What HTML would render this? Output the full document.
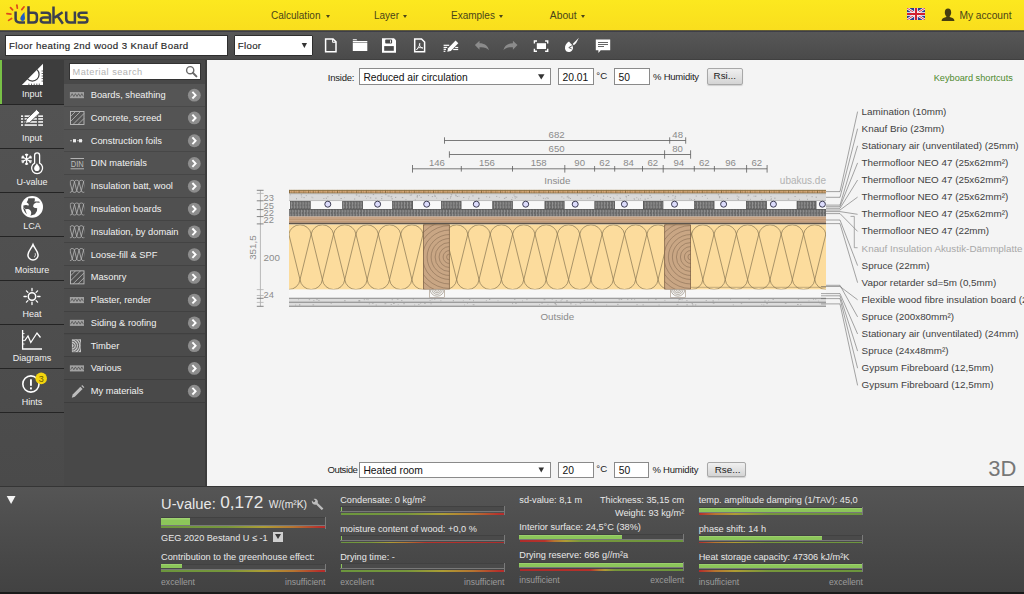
<!DOCTYPE html>
<html><head><meta charset="utf-8">
<style>
*{box-sizing:border-box;margin:0;padding:0}
html,body{width:1024px;height:594px;overflow:hidden;background:#1a1a1a;font-family:"Liberation Sans",sans-serif}
.abs{position:absolute}
#hdr{left:0;top:0;width:1024px;height:31.6px;background:linear-gradient(#fce81f,#f9de1d 93.5%,#6a6230 95%,#3e3e48 96.5%,#3e3e48)}
#tb{left:0;top:31.6px;width:1024px;height:28.4px;background:linear-gradient(#575757,#4a4a4a 96%,#383838)}
#nav{left:0;top:60px;width:64px;height:426px;background:linear-gradient(#545454,#4a4a4a)}
#menu{left:64px;top:60px;width:141px;height:426px;background:#484848}
#strip{left:205px;top:60px;width:2px;height:426px;background:#3c3c3c}
#main{left:207px;top:60px;width:817px;height:426px;background:#f4f4f4}
#bot{left:0;top:485.5px;width:1024px;height:106px;background:linear-gradient(#555,#4c4c4c 45%,#424242);border-top:1px solid #353535}
.hm{font-size:10px;color:#4a4418;top:10.2px;line-height:12px}
.tri{width:0;height:0;border-left:2.5px solid transparent;border-right:2.5px solid transparent;border-top:3px solid #4a4418}
.inp{background:#fff;border:1px solid #2e2e2e;color:#111;line-height:12px;white-space:nowrap}
.dd{position:absolute;width:0;height:0;border-left:2.8px solid transparent;border-right:2.8px solid transparent;border-top:5.2px solid #222}
.nsep{left:0;width:64px;height:1.3px;background:#242424}
.nl{left:0;width:64px;text-align:center;font-size:9px;color:#f0f0f0;line-height:10px}
.sbox{background:#fff;border:1px solid #333}
.mrow{left:64px;width:141px;height:22.77px;background:#535353;border-bottom:1px solid #464646}
.mt{left:90.7px;font-size:9.3px;color:#f2f2f2;line-height:11px;white-space:nowrap}
.sel{background:#fff;border:1px solid #8a8a8a;color:#111;line-height:12px;white-space:nowrap}
.ibox{background:#fff;border:1px solid #8a8a8a;color:#111;line-height:12px;white-space:nowrap}
.btn{background:linear-gradient(#f0f0f0,#d4d4d4);border:1px solid #a8a8a8;border-radius:2px;color:#222;line-height:12px;box-shadow:0 1px 1px rgba(0,0,0,.15)}
.dd2{position:absolute;width:0;height:0;border-left:3.5px solid transparent;border-right:3.5px solid transparent;border-top:6px solid #333}
.lab{left:861.6px;font-size:9.85px;line-height:12px;white-space:nowrap}
.bt{white-space:nowrap;line-height:1}

</style></head><body>
<div id="hdr" class="abs"></div>
<div id="tb" class="abs"></div>
<div id="nav" class="abs"></div>
<div id="menu" class="abs"></div>
<div id="strip" class="abs"></div>
<div id="main" class="abs"></div>
<div id="bot" class="abs"></div>
<!-- HEADER -->
<svg class="abs" style="left:0;top:0" width="100" height="31" viewBox="0 0 100 31">
 <g stroke="#de4a1c" stroke-linecap="round">
  <path d="M16.9 5.1L17.3 8.1" stroke-width="1.7"/>
  <path d="M10.5 7.6L12.6 9.9" stroke-width="1.7"/>
  <path d="M24.1 6.8L21.8 9.6" stroke-width="1.7"/>
  <path d="M6.9 13.6L10.9 14.1" stroke-width="1.7"/>
  <path d="M8.6 20.4L11.6 18.5" stroke-width="1.7"/>
 </g>
 <g fill="none" stroke="#3c404f" stroke-width="2.5">
  <path d="M15.6 11.6V18.6Q15.6 22.5 19.5 22.5H25"/>
  <path d="M28.5 6.2V22.5H33.6Q36.9 22.5 36.9 19.2V15.9Q36.9 12.7 33.6 12.7H28.5"/>
  <path d="M40.6 12.7H46.8Q50.1 12.7 50.1 16V23.7M50.1 17.5H44Q40.8 17.5 40.8 20Q40.8 22.5 44 22.5H50.1"/>
  <path d="M53.5 6.5V23.7M62.6 12.2L54.6 17.6M57.6 16.1L62.9 23.7"/>
  <path d="M66.2 11.6V18.8Q66.2 22.5 69.9 22.5H74.9M74.9 11.6V23.7"/>
  <path d="M87.6 12.7H81.3Q78.5 12.7 78.5 15Q78.5 17.4 81.3 17.4H84.7Q87.4 17.4 87.4 19.9Q87.4 22.5 84.7 22.5H77.6"/>
 </g>
 <path d="M24.6 11.9C22.8 14 20.3 16.2 20.3 18.6C20.3 20.2 21.4 21 22.6 21C24 21 25 19.8 25 18C25 16 24.3 14.5 24.6 11.9Z" fill="#1f5ec6"/>
</svg>
<div class="abs hm" style="left:271px">Calculation</div><div class="abs tri" style="left:326px;top:15px"></div>
<div class="abs hm" style="left:374px">Layer</div><div class="abs tri" style="left:403px;top:15px"></div>
<div class="abs hm" style="left:451px">Examples</div><div class="abs tri" style="left:499px;top:15px"></div>
<div class="abs hm" style="left:549.8px;font-size:10.3px">About</div><div class="abs tri" style="left:580.6px;top:15px"></div>
<svg class="abs" style="left:907px;top:8px" width="18" height="12" viewBox="0 0 60 40" preserveAspectRatio="none">
 <rect width="60" height="40" fill="#2a3f8f"/>
 <path d="M0 0L60 40M60 0L0 40" stroke="#fff" stroke-width="8"/>
 <path d="M0 0L60 40M60 0L0 40" stroke="#d02030" stroke-width="3"/>
 <path d="M30 0V40M0 20H60" stroke="#fff" stroke-width="12"/>
 <path d="M30 0V40M0 20H60" stroke="#d02030" stroke-width="7"/>
</svg>
<svg class="abs" style="left:941px;top:8px" width="14" height="14" viewBox="0 0 14 14">
 <path d="M7 0.6C4.9 0.6 3.8 2.3 3.8 4.4C3.8 6.2 4.6 7.6 5.3 8.2L5.3 9.1C3.3 9.6 1.2 10.4 0.8 11.8L0.6 13H13.4L13.2 11.8C12.8 10.4 10.7 9.6 8.7 9.1L8.7 8.2C9.4 7.6 10.2 6.2 10.2 4.4C10.2 2.3 9.1 0.6 7 0.6Z" fill="#463e10"/>
</svg>
<div class="abs hm" style="left:959.4px;font-size:10.2px">My account</div>

<!-- TOOLBAR -->
<div class="abs inp" style="left:5.2px;top:35.2px;width:223px;height:20.6px;font-size:9.7px;letter-spacing:0.38px;padding:3.6px 0 0 2.8px;color:#262626;-webkit-text-stroke:0.15px #262626">Floor heating 2nd wood 3 Knauf Board</div>
<div class="abs inp" style="left:234.2px;top:35.2px;width:79.3px;height:20.6px;padding:3.4px 0 0 2.6px;border-radius:1px;color:#262626;font-size:9.7px;letter-spacing:0.3px;-webkit-text-stroke:0.15px #262626">Floor</div><svg class="abs" style="left:300px;top:40px" width="10" height="10" viewBox="300 40 10 10"><path d="M301.7 42.9H307L304.35 48Z" fill="#333"/></svg>

<svg class="abs" style="left:0;top:0" width="1024" height="60" viewBox="0 0 1024 60">
 <g fill="none" stroke="#fff" stroke-width="1.5">
  <path d="M325.6 38.9H333L336 41.9V51.7H325.6Z"/>
  <path d="M332.6 39V42.3H335.9" stroke-width="1"/>
 </g>
 <g fill="#fff">
  <path d="M352.8 39.2H356.5L357.3 40.3H352.8Z"/>
  <rect x="352.8" y="41" width="14.5" height="1.1"/>
  <rect x="352.8" y="42.6" width="14.5" height="8.4"/>
 </g>
 <path d="M382 38.2H394L396 40.2V52.8H382Z" fill="#fff"/>
 <rect x="385.2" y="39.6" width="6.9" height="4" rx="0.8" fill="#4a4a4a"/>
 <rect x="390.1" y="40.3" width="0.9" height="2.4" fill="#fff"/>
 <rect x="384.2" y="46.1" width="9.6" height="4.7" fill="#4a4a4a"/>
 <g fill="none" stroke="#fff" stroke-width="1.5">
  <path d="M414.7 38.9H421.5L424.6 42V51.7H414.7Z"/>
 </g>
 <path d="M416.5 49.8C418 48 419.5 45.8 419.8 44.2C420.2 42.6 419 43.2 419.5 45C420 46.7 421.5 48 423 48.2M416.5 49.8L418.6 47.6L422.8 47.8" fill="none" stroke="#fff" stroke-width="0.9"/>
 <!-- edit -->
 <g fill="#fff">
  <rect x="443.6" y="44.7" width="5.6" height="1.2"/><rect x="443.6" y="46.8" width="3.6" height="1.2"/><rect x="443.6" y="48.7" width="2.4" height="1.2"/><rect x="443.6" y="50.7" width="1.8" height="1.2"/>
  <rect x="455.2" y="46.9" width="3" height="1.2"/><rect x="453.2" y="48.9" width="5" height="1.2"/>
  <path d="M447.3 51.8L448.1 48.3L455.6 40.5L458.3 43.2L450.8 50.9Z"/>
 </g>
 <!-- undo/redo -->
 <path d="M474.9 45L479.5 40.7V43.3C484.5 43.3 488 45.8 489 50.3C487 47.9 484 47 479.5 47.3V49.8Z" fill="#8b8b8b"/>
 <path d="M517.5 45L512.9 40.7V43.3C507.9 43.3 504.4 45.8 503.4 50.3C505.4 47.9 508.4 47 512.9 47.3V49.8Z" fill="#8b8b8b"/>
 <!-- fit -->
 <g fill="none" stroke="#fff" stroke-width="1.4">
  <path d="M534.4 43.6V41H537M545.1 41H547.7V43.6M547.7 48.7V51.3H545.1M537 51.3H534.4V48.7"/>
 </g>
 <rect x="536.8" y="43.2" width="9.2" height="5.8" fill="#fff"/>
 <!-- brush -->
 <path d="M578.9 37.8L576.2 43L573.9 45.2L572.7 44.1L574.6 41.9Z" fill="#fff"/>
 <path d="M572.3 44.9C571 44 569.8 42.8 569 41.6C566.4 43 564.7 45.6 565 48.4C565.3 51 567.4 52.4 569.6 51.9C571.7 51.4 572.8 49.7 573.1 47.9Z" fill="#fff"/>
 <path d="M572.2 45.6L568.8 47.6L571.6 48.8" fill="none" stroke="#4b4b4b" stroke-width="0.9"/>
 <!-- comment -->
 <path d="M595.8 39.4H610.2V50.3H600.7L598.4 52.9V50.3H595.8Z" fill="#fff"/>
 <g fill="#555"><rect x="598" y="42" width="10" height="0.9"/><rect x="598" y="44" width="10" height="0.9"/><rect x="598" y="46" width="6" height="0.9"/></g>
</svg>

<!-- NAV -->
<div class="abs" style="left:0;top:60px;width:64px;height:44px;background:#3d3d3d"></div>
<div class="abs" style="left:0;top:60px;width:2px;height:44px;background:#78c046"></div>
<div class="abs nsep" style="top:104px"></div>
<div class="abs nsep" style="top:148px"></div>
<div class="abs nsep" style="top:192px"></div>
<div class="abs nsep" style="top:236px"></div>
<div class="abs nsep" style="top:280px"></div>
<div class="abs nsep" style="top:324px"></div>
<div class="abs nsep" style="top:368px"></div>
<div class="abs nsep" style="top:412px"></div>
<div class="abs nl" style="top:89px">Input</div>
<div class="abs nl" style="top:133px">Input</div>
<div class="abs nl" style="top:177px">U-value</div>
<div class="abs nl" style="top:221px">LCA</div>
<div class="abs nl" style="top:265px">Moisture</div>
<div class="abs nl" style="top:309px">Heat</div>
<div class="abs nl" style="top:353px">Diagrams</div>
<div class="abs nl" style="top:397px">Hints</div>
<svg class="abs" style="left:0;top:60px" width="64" height="360" viewBox="0 60 64 360">
 <!-- set square -->
 <path d="M21.8 85L43 63.8V85Z" fill="#fff"/>
 <path d="M27.6 79.2A6.7 6.7 0 0 0 37.1 69.7" fill="none" stroke="#3d3d3d" stroke-width="1.2"/>
 <g stroke="#3d3d3d" stroke-width="0.8">
  <path d="M28.9 83.6V85M31.5 83.6V85M34.2 83.6V85M36.8 83.6V85M39.3 83.6V85"/>
  <path d="M41.6 71H43M41.6 73.5H43M41.6 76H43M41.6 78.6H43M41.6 81.1H43"/>
 </g>
 <!-- input form -->
 <g fill="#fff">
  <rect x="21" y="115.4" width="2.1" height="1.5"/><rect x="24.6" y="115.4" width="12.3" height="1.5"/><rect x="38.2" y="115.4" width="4.8" height="1.5"/>
  <rect x="21" y="118.2" width="2.1" height="1.5"/><rect x="24.6" y="118.2" width="12.3" height="1.5"/><rect x="38.2" y="118.2" width="4.8" height="1.5"/>
  <rect x="21" y="121.2" width="2.1" height="1.5"/><rect x="24.6" y="121.2" width="12.3" height="1.5"/><rect x="38.2" y="121.2" width="4.8" height="1.5"/>
  <rect x="21" y="124.3" width="2.1" height="1.5"/><rect x="24.6" y="124.3" width="12.3" height="1.5"/><rect x="38.2" y="124.3" width="4.8" height="1.5"/>
 </g>
 <path d="M25.3 123.4L26.4 119.4L36.6 109.6L39.9 112.9L29.6 122.6Z" fill="#fff" stroke="#4f4f4f" stroke-width="0.9"/>
 <!-- snowflake + thermometer -->
 <path d="M26.60 159.30L26.60 154.10 M26.60 156.08L25.45 154.44 M26.60 156.08L27.75 154.44 M26.60 159.30L22.10 156.70 M23.81 157.69L21.82 157.86 M23.81 157.69L22.96 155.88 M26.60 159.30L22.10 161.90 M23.81 160.91L22.96 162.72 M23.81 160.91L21.82 160.74 M26.60 159.30L26.60 164.50 M26.60 162.52L27.75 164.16 M26.60 162.52L25.45 164.16 M26.60 159.30L31.10 161.90 M29.39 160.91L31.38 160.74 M29.39 160.91L30.24 162.72 M26.60 159.30L31.10 156.70 M29.39 157.69L30.24 155.88 M29.39 157.69L31.38 157.86" stroke="#fff" stroke-width="1.1" fill="none" stroke-linecap="round"/>
 <path d="M34.6 163.2V155.4A2.5 2.5 0 0 1 39.6 155.4V163.2A5.5 5.5 0 1 1 34.6 163.2Z" fill="none" stroke="#fff" stroke-width="1.3"/>
 <path d="M36.9 163.2C36.6 164.6 34.1 166 34.1 168.2A2.8 2.8 0 0 0 39.7 168.2C39.7 166 37.2 164.6 36.9 163.2Z" fill="#fff"/>
 <!-- globe -->
 <circle cx="32.1" cy="206.9" r="10.9" fill="#fff"/>
  <path d="M28.35 198.30 L34.67 198.30 Q35.42 200.58 34.16 201.48 L39.21 201.59 L39.82 202.85 L36.18 202.60 Q33.15 203.61 33.05 206.23 Q33.40 208.15 37.19 208.15 Q37.80 211.18 34.92 214.21 L30.37 215.63 Q32.24 212.44 30.22 210.17 Q28.61 208.40 25.58 209.26 Q23.96 208.15 23.05 205.73 Q26.08 204.21 28.35 205.63 Q29.72 204.11 26.69 202.60 Q28.10 200.58 28.35 198.30 Z" fill="#4f4f4f"/>
 <path d="M22.95 206.23 Q23.45 211.43 26.99 214.21 Q25.47 210.78 25.32 209.41 Q23.81 208.25 22.95 206.23 Z" fill="#4f4f4f"/>
 <!-- drop -->
 <path d="M33 244.6C31.6 248.4 27.9 251.2 27.9 254.9A5.1 5.1 0 0 0 38.1 254.9C38.1 251.2 34.4 248.4 33 244.6Z" fill="none" stroke="#fff" stroke-width="1.5"/>
 <path d="M35.2 253.3C35.7 255 35.2 256.6 34 257.3" fill="none" stroke="#fff" stroke-width="0.9"/>
 <!-- sun -->
 <circle cx="32" cy="296.5" r="3.7" fill="none" stroke="#fff" stroke-width="1.5"/>
 <g stroke="#fff" stroke-width="1.3" stroke-linecap="round">
  <path d="M32 288.5V290.8M32 302.2V304.5M24 296.5H26.3M37.7 296.5H40M26.4 290.9L27.9 292.4M36.1 300.6L37.6 302.1M37.6 290.9L36.1 292.4M27.9 300.6L26.4 302.1"/>
 </g>
 <!-- diagram -->
 <g fill="none" stroke="#fff" stroke-width="1.3">
  <path d="M22.6 330V349H42"/>
  <path d="M24.5 341L28 336L30.8 342.5L37 333L40.5 337.5"/>
 </g>
 <g stroke="#fff" stroke-width="0.8"><path d="M23 333.5H24.5M23 337H24.5M23 340.5H24.5M23 344H24.5"/></g>
 <!-- hints -->
 <circle cx="30.9" cy="384" r="8.1" fill="none" stroke="#fff" stroke-width="1.6"/>
 <rect x="30" y="379.3" width="1.9" height="6.5" fill="#fff"/>
 <rect x="30" y="387.4" width="1.9" height="2" fill="#fff"/>
 <circle cx="41.2" cy="378.4" r="5.8" fill="#f4d40e"/>
 <text x="41.3" y="381.6" font-size="9" font-family="Liberation Sans" text-anchor="middle" fill="#6a5a00">3</text>
</svg>

<!-- MENU -->
<div class="abs sbox" style="left:69px;top:63.2px;width:132px;height:17.2px"></div>
<div class="abs" style="left:72.6px;top:66.2px;font-size:9.2px;letter-spacing:0.48px;color:#b2b2b2;line-height:12px">Material search</div>
<svg class="abs" style="left:185px;top:65px" width="13" height="13" viewBox="0 0 13 13"><circle cx="5.2" cy="5.2" r="3.6" fill="none" stroke="#6a6a6a" stroke-width="1.4"/><path d="M7.8 7.8L11.4 11.4" stroke="#6a6a6a" stroke-width="2" stroke-linecap="round"/></svg>
<div class="abs mrow" style="top:84.0px;background:rgb(85,85,85);border-bottom-color:rgb(73,73,73)"></div>
<div class="abs mt" style="top:90.1px">Boards, sheathing</div>
<div class="abs mrow" style="top:106.8px;background:rgb(84,84,84);border-bottom-color:rgb(72,72,72)"></div>
<div class="abs mt" style="top:112.9px">Concrete, screed</div>
<div class="abs mrow" style="top:129.5px;background:rgb(83,83,83);border-bottom-color:rgb(71,71,71)"></div>
<div class="abs mt" style="top:135.6px">Construction foils</div>
<div class="abs mrow" style="top:152.3px;background:rgb(82,82,82);border-bottom-color:rgb(70,70,70)"></div>
<div class="abs mt" style="top:158.4px">DIN materials</div>
<div class="abs mrow" style="top:175.1px;background:rgb(81,81,81);border-bottom-color:rgb(69,69,69)"></div>
<div class="abs mt" style="top:181.2px">Insulation batt, wool</div>
<div class="abs mrow" style="top:197.8px;background:rgb(80,80,80);border-bottom-color:rgb(68,68,68)"></div>
<div class="abs mt" style="top:203.9px">Insulation boards</div>
<div class="abs mrow" style="top:220.6px;background:rgb(79,79,79);border-bottom-color:rgb(67,67,67)"></div>
<div class="abs mt" style="top:226.7px">Insulation, by domain</div>
<div class="abs mrow" style="top:243.4px;background:rgb(79,79,79);border-bottom-color:rgb(67,67,67)"></div>
<div class="abs mt" style="top:249.5px">Loose-fill &amp; SPF</div>
<div class="abs mrow" style="top:266.2px;background:rgb(78,78,78);border-bottom-color:rgb(66,66,66)"></div>
<div class="abs mt" style="top:272.3px">Masonry</div>
<div class="abs mrow" style="top:288.9px;background:rgb(77,77,77);border-bottom-color:rgb(65,65,65)"></div>
<div class="abs mt" style="top:295.0px">Plaster, render</div>
<div class="abs mrow" style="top:311.7px;background:rgb(76,76,76);border-bottom-color:rgb(64,64,64)"></div>
<div class="abs mt" style="top:317.8px">Siding &amp; roofing</div>
<div class="abs mrow" style="top:334.5px;background:rgb(75,75,75);border-bottom-color:rgb(63,63,63)"></div>
<div class="abs mt" style="top:340.6px">Timber</div>
<div class="abs mrow" style="top:357.2px;background:rgb(74,74,74);border-bottom-color:rgb(62,62,62)"></div>
<div class="abs mt" style="top:363.3px">Various</div>
<div class="abs mrow" style="top:380.0px;background:rgb(73,73,73);border-bottom-color:rgb(61,61,61)"></div>
<div class="abs mt" style="top:386.1px">My materials</div>
<svg class="abs" style="left:64px;top:80px" width="141" height="330" viewBox="64 80 141 330">
<circle cx="194.3" cy="95.20" r="6.4" fill="#8d8d8d"/>
<path d="M192.4 91.90L195.6 95.20L192.4 98.50" fill="none" stroke="#fff" stroke-width="1.9"/>
<rect x="69.9" y="92.10" width="14.1" height="6.1" fill="#a2a2a2"/>
<path d="M70.6 96.50L72.2 93.70L73.8 96.50L75.4 93.70L77 96.50L78.6 93.70L80.2 96.50L81.8 93.70L83.4 96.50" fill="none" stroke="#505050" stroke-width="0.8"/>
<circle cx="194.3" cy="117.97" r="6.4" fill="#8d8d8d"/>
<path d="M192.4 114.67L195.6 117.97L192.4 121.27" fill="none" stroke="#fff" stroke-width="1.9"/>
<rect x="70.5" y="111.47" width="13.5" height="13" fill="none" stroke="#bdbdbd" stroke-width="0.9"/>
<g stroke="#bdbdbd" stroke-width="0.8"><path d="M70.5 116.47L75.5 111.47M70.5 121.47L80.5 111.47M73 124.47L84 113.47M78 124.47L84 118.47"/></g>
<circle cx="194.3" cy="140.74" r="6.4" fill="#8d8d8d"/>
<path d="M192.4 137.44L195.6 140.74L192.4 144.04" fill="none" stroke="#fff" stroke-width="1.9"/>
<path d="M70 140.74H84" stroke="#bdbdbd" stroke-width="1" stroke-dasharray="2 1.5"/>
<rect x="73" y="139.14" width="3" height="3.2" fill="#eee"/><rect x="79" y="139.14" width="3" height="3.2" fill="#eee"/>
<circle cx="194.3" cy="163.51" r="6.4" fill="#8d8d8d"/>
<path d="M192.4 160.21L195.6 163.51L192.4 166.81" fill="none" stroke="#fff" stroke-width="1.9"/>
<path d="M70.5 158.51H84M70.5 168.81H84" stroke="#bdbdbd" stroke-width="0.9"/>
<text x="77.2" y="167.01" font-family="Liberation Sans" font-size="9" text-anchor="middle" fill="#bdbdbd" textLength="13" lengthAdjust="spacingAndGlyphs">DIN</text>
<circle cx="194.3" cy="186.28" r="6.4" fill="#8d8d8d"/>
<path d="M192.4 182.98L195.6 186.28L192.4 189.58" fill="none" stroke="#fff" stroke-width="1.9"/>
<g clip-path="url(#icl4)"><path transform="translate(0 0.00)" d="M67.65 190.78 L69.93 181.78 L72.20 190.78 L74.48 181.78 L76.75 190.78 L79.03 181.78 L81.30 190.78 L83.58 181.78 L85.85 190.78 L88.12 181.78 M65.38 181.78A2.4 2.4 0 0 1 69.93 181.78 M67.65 190.78A2.4 2.4 0 0 0 72.20 190.78 M69.92 181.78A2.4 2.4 0 0 1 74.48 181.78 M72.20 190.78A2.4 2.4 0 0 0 76.75 190.78 M74.47 181.78A2.4 2.4 0 0 1 79.03 181.78 M76.75 190.78A2.4 2.4 0 0 0 81.30 190.78 M79.02 181.78A2.4 2.4 0 0 1 83.58 181.78 M81.30 190.78A2.4 2.4 0 0 0 85.85 190.78 M83.57 181.78A2.4 2.4 0 0 1 88.12 181.78 M85.85 190.78A2.4 2.4 0 0 0 90.40 190.78" fill="none" stroke="#bdbdbd" stroke-width="0.75"/></g>
<clipPath id="icl4"><rect x="69.9" y="179.48" width="14.4" height="13.60"/></clipPath>
<circle cx="194.3" cy="209.05" r="6.4" fill="#8d8d8d"/>
<path d="M192.4 205.75L195.6 209.05L192.4 212.35" fill="none" stroke="#fff" stroke-width="1.9"/>
<g clip-path="url(#icl5)"><path transform="translate(0 0.00)" d="M67.65 213.55 L69.93 204.55 L72.20 213.55 L74.48 204.55 L76.75 213.55 L79.03 204.55 L81.30 213.55 L83.58 204.55 L85.85 213.55 L88.12 204.55 M65.38 204.55A2.4 2.4 0 0 1 69.93 204.55 M67.65 213.55A2.4 2.4 0 0 0 72.20 213.55 M69.92 204.55A2.4 2.4 0 0 1 74.48 204.55 M72.20 213.55A2.4 2.4 0 0 0 76.75 213.55 M74.47 204.55A2.4 2.4 0 0 1 79.03 204.55 M76.75 213.55A2.4 2.4 0 0 0 81.30 213.55 M79.02 204.55A2.4 2.4 0 0 1 83.58 204.55 M81.30 213.55A2.4 2.4 0 0 0 85.85 213.55 M83.57 204.55A2.4 2.4 0 0 1 88.12 204.55 M85.85 213.55A2.4 2.4 0 0 0 90.40 213.55" fill="none" stroke="#bdbdbd" stroke-width="0.75"/></g>
<clipPath id="icl5"><rect x="69.9" y="202.25" width="14.4" height="13.60"/></clipPath>
<circle cx="194.3" cy="231.82" r="6.4" fill="#8d8d8d"/>
<path d="M192.4 228.52L195.6 231.82L192.4 235.12" fill="none" stroke="#fff" stroke-width="1.9"/>
<g clip-path="url(#icl6)"><path transform="translate(0 0.00)" d="M67.65 236.32 L69.93 227.32 L72.20 236.32 L74.48 227.32 L76.75 236.32 L79.03 227.32 L81.30 236.32 L83.58 227.32 L85.85 236.32 L88.12 227.32 M65.38 227.32A2.4 2.4 0 0 1 69.93 227.32 M67.65 236.32A2.4 2.4 0 0 0 72.20 236.32 M69.92 227.32A2.4 2.4 0 0 1 74.48 227.32 M72.20 236.32A2.4 2.4 0 0 0 76.75 236.32 M74.47 227.32A2.4 2.4 0 0 1 79.03 227.32 M76.75 236.32A2.4 2.4 0 0 0 81.30 236.32 M79.02 227.32A2.4 2.4 0 0 1 83.58 227.32 M81.30 236.32A2.4 2.4 0 0 0 85.85 236.32 M83.57 227.32A2.4 2.4 0 0 1 88.12 227.32 M85.85 236.32A2.4 2.4 0 0 0 90.40 236.32" fill="none" stroke="#bdbdbd" stroke-width="0.75"/></g>
<clipPath id="icl6"><rect x="69.9" y="225.02" width="14.4" height="13.60"/></clipPath>
<circle cx="194.3" cy="254.59" r="6.4" fill="#8d8d8d"/>
<path d="M192.4 251.29L195.6 254.59L192.4 257.89" fill="none" stroke="#fff" stroke-width="1.9"/>
<g clip-path="url(#icl7)"><path transform="translate(0 0.00)" d="M67.65 259.09 L69.93 250.09 L72.20 259.09 L74.48 250.09 L76.75 259.09 L79.03 250.09 L81.30 259.09 L83.58 250.09 L85.85 259.09 L88.12 250.09 M65.38 250.09A2.4 2.4 0 0 1 69.93 250.09 M67.65 259.09A2.4 2.4 0 0 0 72.20 259.09 M69.92 250.09A2.4 2.4 0 0 1 74.48 250.09 M72.20 259.09A2.4 2.4 0 0 0 76.75 259.09 M74.47 250.09A2.4 2.4 0 0 1 79.03 250.09 M76.75 259.09A2.4 2.4 0 0 0 81.30 259.09 M79.02 250.09A2.4 2.4 0 0 1 83.58 250.09 M81.30 259.09A2.4 2.4 0 0 0 85.85 259.09 M83.57 250.09A2.4 2.4 0 0 1 88.12 250.09 M85.85 259.09A2.4 2.4 0 0 0 90.40 259.09" fill="none" stroke="#bdbdbd" stroke-width="0.75"/></g>
<clipPath id="icl7"><rect x="69.9" y="247.79" width="14.4" height="13.60"/></clipPath>
<circle cx="194.3" cy="277.36" r="6.4" fill="#8d8d8d"/>
<path d="M192.4 274.06L195.6 277.36L192.4 280.66" fill="none" stroke="#fff" stroke-width="1.9"/>
<rect x="70.5" y="270.86" width="13.5" height="13" fill="none" stroke="#bdbdbd" stroke-width="0.9"/>
<g stroke="#bdbdbd" stroke-width="0.8"><path d="M70.5 275.86L75.5 270.86M70.5 280.86L80.5 270.86M73 283.86L84 272.86M78 283.86L84 277.86"/></g>
<circle cx="194.3" cy="300.13" r="6.4" fill="#8d8d8d"/>
<path d="M192.4 296.83L195.6 300.13L192.4 303.43" fill="none" stroke="#fff" stroke-width="1.9"/>
<rect x="69.9" y="297.03" width="14.1" height="6.1" fill="#a2a2a2"/>
<path d="M70.6 301.43L72.2 298.63L73.8 301.43L75.4 298.63L77 301.43L78.6 298.63L80.2 301.43L81.8 298.63L83.4 301.43" fill="none" stroke="#505050" stroke-width="0.8"/>
<circle cx="194.3" cy="322.90" r="6.4" fill="#8d8d8d"/>
<path d="M192.4 319.60L195.6 322.90L192.4 326.20" fill="none" stroke="#fff" stroke-width="1.9"/>
<rect x="69.9" y="319.80" width="14.1" height="6.1" fill="#a2a2a2"/>
<path d="M70.6 324.20L72.2 321.40L73.8 324.20L75.4 321.40L77 324.20L78.6 321.40L80.2 324.20L81.8 321.40L83.4 324.20" fill="none" stroke="#505050" stroke-width="0.8"/>
<circle cx="194.3" cy="345.67" r="6.4" fill="#8d8d8d"/>
<path d="M192.4 342.37L195.6 345.67L192.4 348.97" fill="none" stroke="#fff" stroke-width="1.9"/>
<rect x="71.9" y="339.27" width="9.1" height="12.9" fill="#c4c4c4"/>
<clipPath id="tcl11"><rect x="72.4" y="339.77" width="8.1" height="11.9"/></clipPath>
<path clip-path="url(#tcl11)" d="M72 343.47A2.2 2.2 0 0 1 72 347.87 M72 341.27A4.4 4.4 0 0 1 72 350.07 M72 339.07A6.6 6.6 0 0 1 72 352.27 M72 336.87A8.8 8.8 0 0 1 72 354.47" fill="none" stroke="#4a4a4a" stroke-width="0.9"/>
<circle cx="194.3" cy="368.44" r="6.4" fill="#8d8d8d"/>
<path d="M192.4 365.14L195.6 368.44L192.4 371.74" fill="none" stroke="#fff" stroke-width="1.9"/>
<rect x="69.9" y="365.34" width="14.1" height="6.1" fill="#a2a2a2"/>
<path d="M70.6 369.74L72.2 366.94L73.8 369.74L75.4 366.94L77 369.74L78.6 366.94L80.2 369.74L81.8 366.94L83.4 369.74" fill="none" stroke="#505050" stroke-width="0.8"/>
<circle cx="194.3" cy="391.21" r="6.4" fill="#8d8d8d"/>
<path d="M192.4 387.91L195.6 391.21L192.4 394.51" fill="none" stroke="#fff" stroke-width="1.9"/>
<path d="M80.4 386.81L82.6 389.01L74.8 396.81L71.8 397.81L72.7 394.61Z" fill="#bdbdbd"/>
<path d="M81.3 385.91L82.2 385.01L84.4 387.21L83.5 388.11Z" fill="#bdbdbd"/>
</svg>
<!-- MAIN ROWS -->
<div class="abs" style="left:327.7px;top:71.6px;font-size:9.5px;letter-spacing:-0.2px;color:#222;line-height:11px">Inside:</div>
<div class="abs sel" style="left:359px;top:68px;width:191.5px;height:16.8px"><span style="position:absolute;left:3.4px;top:2.7px;font-size:10.25px">Reduced air circulation</span></div>
<div class="abs ibox" style="left:558px;top:68px;width:35.5px;height:16.6px"><span style="position:absolute;left:3.5px;top:2.8px;font-size:10.3px">20.01</span></div>
<div class="abs" style="left:596.3px;top:69.8px;font-size:9.7px;color:#222;line-height:11px">°C</div>
<div class="abs ibox" style="left:614px;top:68px;width:35.6px;height:16.6px"><span style="position:absolute;left:3.5px;top:2.8px;font-size:10.3px">50</span></div>
<div class="abs" style="left:653px;top:70.6px;font-size:9.5px;letter-spacing:-0.22px;color:#222;line-height:11px">% Humidity</div>
<div class="abs btn" style="left:707px;top:68px;width:35.5px;height:16.5px"><span style="position:absolute;left:5.6px;top:1.4px;font-size:9.8px">Rsi...</span></div>
<div class="abs" style="left:933.7px;top:72.5px;font-size:9.2px;color:#4e8a2e;line-height:11px">Keyboard shortcuts</div>

<div class="abs" style="left:327.5px;top:464.2px;font-size:9.6px;letter-spacing:-0.45px;color:#222;line-height:11px">Outside</div>
<div class="abs sel" style="left:359px;top:462px;width:191.7px;height:15.6px"><span style="position:absolute;left:3.4px;top:1.9px;font-size:10.3px">Heated room</span></div>
<div class="abs ibox" style="left:558px;top:462.2px;width:35.6px;height:15.4px"><span style="position:absolute;left:3.5px;top:2px;font-size:10.3px">20</span></div>
<div class="abs" style="left:596.3px;top:463.3px;font-size:9.7px;color:#222;line-height:11px">°C</div>
<div class="abs ibox" style="left:614.2px;top:462.2px;width:35.3px;height:15.4px"><span style="position:absolute;left:3.5px;top:2px;font-size:10.3px">50</span></div>
<div class="abs" style="left:652.4px;top:464.4px;font-size:9.5px;letter-spacing:-0.22px;color:#222;line-height:11px">% Humidity</div>
<div class="abs btn" style="left:707.4px;top:461.7px;width:38.2px;height:15.8px"><span style="position:absolute;left:6.3px;top:1.2px;font-size:9.9px">Rse...</span></div>
<div class="abs" style="left:988.3px;top:458.3px;font-size:22px;color:#777;line-height:22px">3D</div>

<svg class="abs" style="left:530px;top:70px" width="20" height="410" viewBox="530 70 20 410"><path d="M538 74.2H544.5L541.25 79.6Z" fill="#333"/><path d="M538.5 467.6H544L541.25 472.6Z" fill="#333"/></svg>

<svg class="abs" style="left:207px;top:60px" width="817" height="426" viewBox="207 60 817 426">
<defs>
<pattern id="pth" x="0" y="201.6" width="2.9" height="3.7" patternUnits="userSpaceOnUse">
 <rect width="2.9" height="3.7" fill="#646464"/><path d="M1 0.3L1.9 1.8L1 3.4" fill="none" stroke="#9a9a9a" stroke-width="1.1"/>
</pattern>
<pattern id="pth2" x="1.4" y="209.4" width="2.9" height="3.6" patternUnits="userSpaceOnUse">
 <rect width="2.9" height="3.6" fill="#646464"/><path d="M1 0.3L1.9 1.8L1 3.3" fill="none" stroke="#9a9a9a" stroke-width="1.1"/>
</pattern>
<pattern id="plam" x="289" y="190" width="9.6" height="4" patternUnits="userSpaceOnUse">
 <rect width="9.6" height="4" fill="#d8a878"/><rect x="0" y="0" width="0.9" height="4" fill="#8a6a3e"/><rect x="2.3" y="0" width="0.6" height="4" fill="#a88658"/><rect x="4.6" y="0" width="0.8" height="4" fill="#8e6e42"/><rect x="7.1" y="0" width="0.6" height="4" fill="#a88658"/>
</pattern>
<linearGradient id="ggyp" x1="0" y1="0" x2="0" y2="1">
 <stop offset="0" stop-color="#8e8e8e"/><stop offset="0.25" stop-color="#d0d0d0"/><stop offset="0.6" stop-color="#dadada"/><stop offset="1" stop-color="#9a9a9a"/>
</linearGradient>
<clipPath id="cb1"><rect x="423.2" y="224.5" width="26.4" height="65.1"/></clipPath>
<clipPath id="cb2"><rect x="664.4" y="224.5" width="26.5" height="65.1"/></clipPath>
<clipPath id="cs1"><rect x="429.3" y="289.6" width="15.6" height="8.2"/></clipPath>
<clipPath id="cs2"><rect x="670" y="289.6" width="15.7" height="8.2"/></clipPath>
<clipPath id="cins"><rect x="289" y="224.4" width="537" height="65.3"/></clipPath>
</defs>
<rect x="289.0" y="189.9" width="537.0" height="3.7" fill="url(#plam)"/>
<rect x="289.0" y="189.9" width="537.0" height="0.9" fill="#8a7244"/>
<rect x="289.0" y="192.7" width="537.0" height="0.9" fill="#75643e"/>
<rect x="289.0" y="193.6" width="537.0" height="7" fill="#d9d9d9"/>
<rect x="289.0" y="193.6" width="537.0" height="0.6" fill="#b5b5b5"/>
<rect x="289.0" y="200.3" width="537.0" height="0.9" fill="#b0b0b0"/>
<path d="M416.8 197.4h0.8 M613.3 197.9h0.6 M296.1 199.0h0.7 M414.8 199.8h0.9 M738.2 197.1h1.1 M369.9 197.9h1.3 M569.9 198.5h1.1 M323.4 198.5h1.0 M450.8 194.8h1.3 M542.9 198.3h1.3 M672.5 199.4h0.9 M719.1 196.9h1.3 M761.0 195.1h0.6 M405.5 199.6h0.9 M625.5 196.2h1.0 M496.2 196.4h1.0 M602.7 199.3h1.1 M787.8 199.1h1.4 M649.5 195.4h1.3 M807.0 199.3h1.0 M672.3 195.7h1.2 M597.0 196.1h0.6 M747.6 199.7h0.6 M718.9 196.7h0.6 M446.8 198.6h1.3 M312.7 197.8h0.5 M674.8 196.3h1.3 M815.6 197.2h1.4 M455.3 195.0h1.0 M305.8 195.6h0.9 M616.8 195.4h0.5 M755.0 196.2h1.4 M770.5 196.6h0.9 M568.3 197.9h1.0 M589.3 197.8h1.3 M561.3 196.8h1.1 M416.6 196.2h1.4 M568.8 197.5h0.5 M512.0 197.6h0.5 M619.7 197.9h0.6 M625.9 197.0h1.1 M478.3 198.3h1.2 M300.9 194.9h1.1 M806.3 195.9h0.9 M607.3 196.3h0.8 M456.9 196.5h1.0 M450.3 196.6h1.2 M303.5 197.6h1.2 M455.5 195.8h1.2 M417.2 195.6h0.9 M663.9 195.1h0.8 M468.2 198.9h0.9 M748.4 195.5h0.8 M638.2 199.2h0.9 M409.8 195.2h1.0 M391.5 198.8h1.3 M387.6 196.0h1.2 M633.7 198.8h0.8 M358.6 196.1h1.2 M434.6 196.4h0.9 M514.4 196.7h1.3 M372.8 194.6h1.3 M761.5 199.7h0.9 M799.2 199.4h0.7 M689.3 199.0h1.1 M567.7 196.1h0.8 M411.1 195.0h1.0 M443.1 198.8h0.5 M774.2 198.2h1.3 M770.5 199.3h1.0 M296.1 198.5h0.7 M450.0 198.0h1.0 M511.2 199.5h1.1 M472.3 195.9h1.3 M545.3 198.7h0.8 M395.0 197.4h1.2 M381.0 198.7h1.3 M721.8 198.9h0.5 M626.6 199.1h0.5 M434.7 196.0h1.0 M516.1 197.1h1.2 M290.0 194.9h0.6 M355.9 195.0h1.4 M747.8 195.0h1.0 M458.6 196.2h0.8 M636.4 197.7h0.8 M391.6 196.3h0.6 M587.3 198.3h0.8 M331.9 195.5h0.8 M613.6 198.7h0.8 M719.2 197.8h0.9 M489.0 197.2h1.1 M514.8 198.2h0.9 M420.6 197.4h1.1 M327.4 196.8h0.9 M761.4 199.5h0.8 M771.1 198.7h0.7 M538.2 195.2h1.2 M644.6 199.2h1.2 M647.5 198.4h1.0 M344.4 197.7h0.5 M366.1 198.6h0.5 M338.3 195.1h1.3 M385.2 194.7h1.3 M354.1 199.0h1.1 M738.0 199.6h1.0 M717.9 194.8h1.2 M563.6 198.3h0.6 M691.2 199.5h0.6 M463.1 197.5h1.2 M419.0 195.5h0.7 M619.8 198.5h0.9 M486.3 196.7h0.8 M513.6 195.0h1.0 M811.5 196.7h1.2 M375.3 198.2h1.2 M650.9 197.3h0.9 M634.3 199.3h0.6 M340.5 198.5h1.3 M566.8 196.9h1.1 M388.9 196.0h0.7 M603.5 196.2h0.7 M660.1 199.6h0.8 M667.8 196.7h1.3 M603.0 196.0h0.7 M301.4 197.1h0.8 M381.5 196.5h0.8 M704.7 195.3h1.4 M546.5 197.7h0.9 M737.2 198.9h1.0 M547.5 198.3h1.3 M503.9 198.4h1.4 M540.0 195.8h0.7 M674.4 198.1h1.4 M747.5 195.9h0.7 M427.9 195.6h1.1 M750.1 199.3h0.7 M753.6 196.2h0.9 M680.5 195.0h0.6 M736.8 196.1h0.8 M600.6 198.1h0.5 M468.8 196.9h0.9 M401.8 197.6h1.4 M498.9 197.4h0.6 M436.5 198.1h0.6 M765.4 199.3h0.6 M794.5 196.5h1.2 M695.7 196.1h1.1 M640.2 198.8h0.7 M694.0 199.6h1.1 M576.9 195.2h0.9 M478.1 198.3h1.1 M593.2 195.5h1.1 M627.8 195.5h1.3 M640.9 195.2h1.3 M364.9 196.3h1.1 M609.8 197.5h1.1 M534.8 196.2h0.7 M325.8 198.3h1.2 M580.7 198.4h0.8 M431.8 196.6h1.3 M311.6 197.2h0.7 M701.9 196.4h0.8 M505.6 197.4h1.2 M478.5 199.0h0.6 M434.3 195.1h0.6 M707.3 198.4h0.7 M390.6 196.8h1.2 M727.1 198.5h1.0 M367.7 196.7h0.7" stroke="#8a8a8a" stroke-width="0.6"/>
<rect x="289.0" y="201.2" width="537.0" height="7.9" fill="#f8f8f8"/>
<rect x="290.3" y="201.2" width="20.2" height="8" fill="url(#pth)"/>
<rect x="290.60" y="201.5" width="19.6" height="7.5" fill="none" stroke="#505050" stroke-width="0.6"/>
<rect x="342.4" y="201.2" width="20.5" height="8" fill="url(#pth)"/>
<rect x="342.70" y="201.5" width="19.9" height="7.5" fill="none" stroke="#505050" stroke-width="0.6"/>
<rect x="392.3" y="201.2" width="20.7" height="8" fill="url(#pth)"/>
<rect x="392.60" y="201.5" width="20.1" height="7.5" fill="none" stroke="#505050" stroke-width="0.6"/>
<rect x="441.2" y="201.2" width="20.1" height="8" fill="url(#pth)"/>
<rect x="441.50" y="201.5" width="19.5" height="7.5" fill="none" stroke="#505050" stroke-width="0.6"/>
<rect x="492.5" y="201.2" width="20.2" height="8" fill="url(#pth)"/>
<rect x="492.80" y="201.5" width="19.6" height="7.5" fill="none" stroke="#505050" stroke-width="0.6"/>
<rect x="544.7" y="201.2" width="19.7" height="8" fill="url(#pth)"/>
<rect x="545.00" y="201.5" width="19.1" height="7.5" fill="none" stroke="#505050" stroke-width="0.6"/>
<rect x="594.6" y="201.2" width="20.3" height="8" fill="url(#pth)"/>
<rect x="594.90" y="201.5" width="19.7" height="7.5" fill="none" stroke="#505050" stroke-width="0.6"/>
<rect x="643" y="201.2" width="20.2" height="8" fill="url(#pth)"/>
<rect x="643.30" y="201.5" width="19.6" height="7.5" fill="none" stroke="#505050" stroke-width="0.6"/>
<rect x="694.3" y="201.2" width="20.0" height="8" fill="url(#pth)"/>
<rect x="694.60" y="201.5" width="19.4" height="7.5" fill="none" stroke="#505050" stroke-width="0.6"/>
<rect x="746" y="201.2" width="20.8" height="8" fill="url(#pth)"/>
<rect x="746.30" y="201.5" width="20.2" height="7.5" fill="none" stroke="#505050" stroke-width="0.6"/>
<rect x="796.8" y="201.2" width="19.5" height="8" fill="url(#pth)"/>
<rect x="797.10" y="201.5" width="18.9" height="7.5" fill="none" stroke="#505050" stroke-width="0.6"/>
<circle cx="327.8" cy="204.2" r="3" fill="#dcdcfc" stroke="#34344a" stroke-width="0.95"/>
<circle cx="377.6" cy="204.2" r="3" fill="#dcdcfc" stroke="#34344a" stroke-width="0.95"/>
<circle cx="426.7" cy="204.2" r="3" fill="#dcdcfc" stroke="#34344a" stroke-width="0.95"/>
<circle cx="476.3" cy="204.2" r="3" fill="#dcdcfc" stroke="#34344a" stroke-width="0.95"/>
<circle cx="525.7" cy="204.2" r="3" fill="#dcdcfc" stroke="#34344a" stroke-width="0.95"/>
<circle cx="575.2" cy="204.2" r="3" fill="#dcdcfc" stroke="#34344a" stroke-width="0.95"/>
<circle cx="624.4" cy="204.2" r="3" fill="#dcdcfc" stroke="#34344a" stroke-width="0.95"/>
<circle cx="674.5" cy="204.2" r="3" fill="#dcdcfc" stroke="#34344a" stroke-width="0.95"/>
<circle cx="723.6" cy="204.2" r="3" fill="#dcdcfc" stroke="#34344a" stroke-width="0.95"/>
<circle cx="773.4" cy="204.2" r="3" fill="#dcdcfc" stroke="#34344a" stroke-width="0.95"/>
<circle cx="822.4" cy="204.2" r="3" fill="#dcdcfc" stroke="#34344a" stroke-width="0.95"/>
<rect x="289.0" y="209.1" width="537.0" height="7.4" fill="url(#pth2)"/>
<rect x="289.0" y="209.0" width="537.0" height="0.6" fill="#505050"/>
<rect x="289.0" y="216.5" width="537.0" height="6.4" fill="#c7a282"/>
<path d="M289.0 218.2H480C520 218.6 560 217.6 620 218.3H826.0M289.0 220.6H400C460 221 520 220.2 600 220.9H826.0" stroke="#d4b496" stroke-width="0.8" fill="none" opacity="0.6"/>
<path d="M289.0 219.3H350C420 219.8 500 219 560 219.6H826.0M289.0 221.8H500C560 222 650 221.5 826.0 221.9" stroke="#a88058" stroke-width="0.5" fill="none" opacity="0.6"/>
<rect x="289.0" y="222.8" width="537.0" height="1.7" fill="#5c544c"/>
<rect x="289.0" y="224.5" width="537.0" height="65.1" fill="#fcdc9d"/>
<path clip-path="url(#cins)" d="M277.62 279.60 L288.81 234.00 L300.00 279.60 L311.19 234.00 L322.38 279.60 L333.57 234.00 L344.76 279.60 L355.95 234.00 L367.14 279.60 L378.33 234.00 L389.52 279.60 L400.71 234.00 L411.90 279.60 L423.09 234.00 L434.28 279.60 L445.47 234.00 L456.66 279.60 L467.85 234.00 L479.04 279.60 L490.23 234.00 L501.42 279.60 L512.61 234.00 L523.80 279.60 L534.99 234.00 L546.18 279.60 L557.37 234.00 L568.56 279.60 L579.75 234.00 L590.94 279.60 L602.13 234.00 L613.32 279.60 L624.51 234.00 L635.70 279.60 L646.89 234.00 L658.08 279.60 L669.27 234.00 L680.46 279.60 L691.65 234.00 L702.84 279.60 L714.03 234.00 L725.22 279.60 L736.41 234.00 L747.60 279.60 L758.79 234.00 L769.98 279.60 L781.17 234.00 L792.36 279.60 L803.55 234.00 L814.74 279.60 L825.93 234.00 L837.12 279.60 L848.31 234.00 M266.43 234.0A11.41 11.41 0 0 1 288.81 234.0 M277.62 279.6A11.27 11.27 0 0 0 300.00 279.6 M288.81 234.0A11.41 11.41 0 0 1 311.19 234.0 M300.00 279.6A11.27 11.27 0 0 0 322.38 279.6 M311.19 234.0A11.41 11.41 0 0 1 333.57 234.0 M322.38 279.6A11.27 11.27 0 0 0 344.76 279.6 M333.57 234.0A11.41 11.41 0 0 1 355.95 234.0 M344.76 279.6A11.27 11.27 0 0 0 367.14 279.6 M355.95 234.0A11.41 11.41 0 0 1 378.33 234.0 M367.14 279.6A11.27 11.27 0 0 0 389.52 279.6 M378.33 234.0A11.41 11.41 0 0 1 400.71 234.0 M389.52 279.6A11.27 11.27 0 0 0 411.90 279.6 M400.71 234.0A11.41 11.41 0 0 1 423.09 234.0 M411.90 279.6A11.27 11.27 0 0 0 434.28 279.6 M423.09 234.0A11.41 11.41 0 0 1 445.47 234.0 M434.28 279.6A11.27 11.27 0 0 0 456.66 279.6 M445.47 234.0A11.41 11.41 0 0 1 467.85 234.0 M456.66 279.6A11.27 11.27 0 0 0 479.04 279.6 M467.85 234.0A11.41 11.41 0 0 1 490.23 234.0 M479.04 279.6A11.27 11.27 0 0 0 501.42 279.6 M490.23 234.0A11.41 11.41 0 0 1 512.61 234.0 M501.42 279.6A11.27 11.27 0 0 0 523.80 279.6 M512.61 234.0A11.41 11.41 0 0 1 534.99 234.0 M523.80 279.6A11.27 11.27 0 0 0 546.18 279.6 M534.99 234.0A11.41 11.41 0 0 1 557.37 234.0 M546.18 279.6A11.27 11.27 0 0 0 568.56 279.6 M557.37 234.0A11.41 11.41 0 0 1 579.75 234.0 M568.56 279.6A11.27 11.27 0 0 0 590.94 279.6 M579.75 234.0A11.41 11.41 0 0 1 602.13 234.0 M590.94 279.6A11.27 11.27 0 0 0 613.32 279.6 M602.13 234.0A11.41 11.41 0 0 1 624.51 234.0 M613.32 279.6A11.27 11.27 0 0 0 635.70 279.6 M624.51 234.0A11.41 11.41 0 0 1 646.89 234.0 M635.70 279.6A11.27 11.27 0 0 0 658.08 279.6 M646.89 234.0A11.41 11.41 0 0 1 669.27 234.0 M658.08 279.6A11.27 11.27 0 0 0 680.46 279.6 M669.27 234.0A11.41 11.41 0 0 1 691.65 234.0 M680.46 279.6A11.27 11.27 0 0 0 702.84 279.6 M691.65 234.0A11.41 11.41 0 0 1 714.03 234.0 M702.84 279.6A11.27 11.27 0 0 0 725.22 279.6 M714.03 234.0A11.41 11.41 0 0 1 736.41 234.0 M725.22 279.6A11.27 11.27 0 0 0 747.60 279.6 M736.41 234.0A11.41 11.41 0 0 1 758.79 234.0 M747.60 279.6A11.27 11.27 0 0 0 769.98 279.6 M758.79 234.0A11.41 11.41 0 0 1 781.17 234.0 M769.98 279.6A11.27 11.27 0 0 0 792.36 279.6 M781.17 234.0A11.41 11.41 0 0 1 803.55 234.0 M792.36 279.6A11.27 11.27 0 0 0 814.74 279.6 M803.55 234.0A11.41 11.41 0 0 1 825.93 234.0 M814.74 279.6A11.27 11.27 0 0 0 837.12 279.6 M825.93 234.0A11.41 11.41 0 0 1 848.31 234.0 M837.12 279.6A11.27 11.27 0 0 0 859.50 279.6" fill="none" stroke="#857452" stroke-width="0.7"/>
<path d="M691 287.3H826" stroke="#8a7a58" stroke-width="0.5"/>
<rect x="423.2" y="224.5" width="26.4" height="65.1" fill="#c9a684"/>
<path clip-path="url(#cb1)" d="M449.59999999999997 254.0A3.0 3.0 0 0 0 449.59999999999997 260.0 M449.59999999999997 250.5A6.5 6.5 0 0 0 449.59999999999997 263.5 M449.59999999999997 246.5A10.5 10.5 0 0 0 449.59999999999997 267.5 M449.59999999999997 242.5A14.5 14.5 0 0 0 449.59999999999997 271.5 M449.59999999999997 238.5A18.5 18.5 0 0 0 449.59999999999997 275.5 M449.59999999999997 234.5A22.5 22.5 0 0 0 449.59999999999997 279.5 M449.59999999999997 230.0A27.0 27.0 0 0 0 449.59999999999997 284.0 M449.59999999999997 225.5A31.5 31.5 0 0 0 449.59999999999997 288.5 M449.59999999999997 221.0A36.0 36.0 0 0 0 449.59999999999997 293.0 M449.59999999999997 216.0A41.0 41.0 0 0 0 449.59999999999997 298.0" fill="none" stroke="#8a6e56" stroke-width="0.6"/>
<rect x="423.5" y="224.8" width="25.799999999999997" height="64.5" fill="none" stroke="#7a5e44" stroke-width="0.7"/>
<rect x="664.4" y="224.5" width="26.5" height="65.1" fill="#c9a684"/>
<path clip-path="url(#cb2)" d="M690.9 254.0A3.0 3.0 0 0 0 690.9 260.0 M690.9 250.5A6.5 6.5 0 0 0 690.9 263.5 M690.9 246.5A10.5 10.5 0 0 0 690.9 267.5 M690.9 242.5A14.5 14.5 0 0 0 690.9 271.5 M690.9 238.5A18.5 18.5 0 0 0 690.9 275.5 M690.9 234.5A22.5 22.5 0 0 0 690.9 279.5 M690.9 230.0A27.0 27.0 0 0 0 690.9 284.0 M690.9 225.5A31.5 31.5 0 0 0 690.9 288.5 M690.9 221.0A36.0 36.0 0 0 0 690.9 293.0 M690.9 216.0A41.0 41.0 0 0 0 690.9 298.0" fill="none" stroke="#8a6e56" stroke-width="0.6"/>
<rect x="664.6999999999999" y="224.8" width="25.9" height="64.5" fill="none" stroke="#7a5e44" stroke-width="0.7"/>
<rect x="289.0" y="289.6" width="537.0" height="8.2" fill="#f7f7f7"/>
<rect x="429.3" y="289.6" width="15.6" height="8.2" fill="#fafafa"/>
<path clip-path="url(#cs1)" d="M435.1 289.2A2.0 2.0 0 0 0 439.1 289.2 M433.5 289.2A3.6 3.6 0 0 0 440.7 289.2 M431.9 289.2A5.2 5.2 0 0 0 442.3 289.2 M430.1 289.2A7.0 7.0 0 0 0 444.1 289.2" fill="none" stroke="#8a8070" stroke-width="0.6"/>
<rect x="429.6" y="289.7" width="15.0" height="7.9" fill="none" stroke="#a09080" stroke-width="0.6"/>
<rect x="670" y="289.6" width="15.7" height="8.2" fill="#fafafa"/>
<path clip-path="url(#cs2)" d="M675.9 289.2A2.0 2.0 0 0 0 679.9 289.2 M674.2 289.2A3.6 3.6 0 0 0 681.5 289.2 M672.6 289.2A5.2 5.2 0 0 0 683.1 289.2 M670.9 289.2A7.0 7.0 0 0 0 684.9 289.2" fill="none" stroke="#8a8070" stroke-width="0.6"/>
<rect x="670.3" y="289.7" width="15.1" height="7.9" fill="none" stroke="#a09080" stroke-width="0.6"/>
<rect x="289.0" y="297.8" width="537.0" height="9" fill="#dcdcdc"/>
<rect x="289.0" y="297.8" width="537.0" height="1.0" fill="#8e8e8e"/>
<rect x="289.0" y="301.7" width="537.0" height="1.1" fill="#8e8e8e"/>
<rect x="289.0" y="305.7" width="537.0" height="1.1" fill="#8e8e8e"/>
<path d="M462.9 300.6h0.7 M730.0 299.4h0.7 M561.5 299.3h1.1 M418.2 304.4h1.3 M797.8 299.5h1.1 M813.2 299.5h0.8 M514.1 299.5h1.3 M655.2 299.5h1.4 M489.0 299.5h1.3 M555.6 304.9h1.2 M784.9 303.4h1.6 M664.4 300.4h1.0 M554.9 303.6h0.9 M815.4 299.5h0.8 M472.7 304.7h1.8 M330.7 303.4h1.0 M555.7 304.4h0.7 M434.0 299.2h1.4 M636.5 304.6h1.1 M648.1 299.8h1.0 M617.1 304.4h1.5 M358.5 300.6h1.7 M555.6 300.7h1.3 M763.4 304.9h0.9 M512.0 303.6h1.1 M412.9 299.3h0.9 M414.3 304.9h0.8 M440.4 300.7h1.0 M593.1 300.8h1.2 M620.6 299.5h1.6 M800.2 304.6h1.1 M547.6 304.4h0.7 M401.1 300.5h1.3 M344.0 300.7h1.7 M618.6 299.7h1.3 M368.8 303.8h1.3 M543.6 299.7h1.8 M539.2 304.6h0.8 M691.6 303.5h1.4 M566.3 301.0h1.2 M367.7 299.7h1.0 M634.2 299.6h0.9 M485.9 300.6h0.9 M579.8 303.6h1.3 M712.4 300.9h1.6 M686.3 300.5h1.2 M681.5 299.7h1.2 M393.0 303.5h1.7 M819.6 303.2h0.7 M541.4 303.3h1.3 M772.5 299.5h1.4 M718.4 299.7h0.7 M497.6 300.7h0.8 M712.8 303.3h1.7 M676.6 304.6h1.7 M678.2 301.0h0.6 M606.3 304.9h0.8 M732.8 304.8h1.0 M583.6 300.4h1.6 M679.1 299.5h1.7 M522.0 300.9h0.9 M424.2 303.5h1.5 M464.1 304.9h0.7 M686.3 304.8h1.6 M566.5 300.7h1.2 M299.0 304.9h1.3 M705.7 300.5h1.2 M678.4 299.4h1.2 M587.3 299.7h0.7 M391.7 299.7h1.2 M590.6 299.5h1.3 M560.5 300.8h1.1 M575.4 304.7h0.9 M570.0 303.8h1.7 M397.8 304.5h0.7 M526.4 299.6h1.1 M403.2 303.7h1.7 M371.9 303.3h1.7 M808.6 300.8h0.7 M764.2 301.0h1.6 M375.7 305.0h1.1 M515.2 303.4h1.5 M299.5 304.7h0.6 M467.0 303.5h0.7 M818.0 301.0h0.7 M431.6 299.7h0.8 M694.9 304.9h1.4 M797.0 304.5h1.7 M595.4 303.3h0.7 M658.6 304.9h0.9 M298.0 299.7h0.7 M748.8 299.4h0.7 M295.2 305.0h0.9 M358.4 301.0h1.8 M429.6 300.5h1.0 M452.8 300.6h1.2 M384.5 303.7h1.8 M308.8 299.6h1.3 M390.7 304.5h1.1 M642.5 304.8h1.3 M766.2 303.6h1.8 M473.0 300.6h1.0 M318.2 300.4h1.4 M761.5 304.5h0.7 M740.8 303.6h1.4 M313.3 300.5h1.1 M430.4 303.8h1.3 M420.3 303.3h0.8 M469.1 299.5h1.2 M396.9 299.3h1.6 M366.3 299.4h1.0 M627.1 299.6h1.2 M692.0 304.9h1.5 M554.4 303.6h1.4 M312.5 304.8h1.6 M363.8 299.7h1.3 M768.4 300.5h0.7 M631.1 299.4h1.1 M316.3 299.6h1.4 M551.8 299.5h0.7" stroke="#8c8c8c" stroke-width="0.5"/>
</svg>
<svg class="abs" style="left:207px;top:60px" width="817" height="426" viewBox="207 60 817 426">
<g stroke="#5a5a5a" stroke-width="0.8" fill="none">
<path d="M444.5 140.5H685.7M444.5 137.3V143.7M669.7 137.3V143.7M685.7 137.3V143.7"/>
<path d="M449.4 154.5H690.6M449.4 151.3V157.7M664.6 150.3V158.7M690.6 150.3V158.7"/>
<path d="M412.5 168.8H767.1"/>
<path d="M412.5 165V172.6"/>
<path d="M461.3 166V171.6"/>
<path d="M512.5 166V171.6"/>
<path d="M564.8 165V172.6"/>
<path d="M594.6 166V171.6"/>
<path d="M614.7 166V171.6"/>
<path d="M642.5 166V171.6"/>
<path d="M663.2 165V172.6"/>
<path d="M694.3 166V171.6"/>
<path d="M714.4 166V171.6"/>
<path d="M746.6 165V172.6"/>
<path d="M767.1 165V172.6"/>
</g>
<text x="556.6" y="137.6" font-family="Liberation Sans" font-size="9.6" fill="#8a8a8a" text-anchor="middle" >682</text>
<text x="677.7" y="137.6" font-family="Liberation Sans" font-size="9.6" fill="#8a8a8a" text-anchor="middle" >48</text>
<text x="556.6" y="151.8" font-family="Liberation Sans" font-size="9.6" fill="#8a8a8a" text-anchor="middle" >650</text>
<text x="677.6" y="151.8" font-family="Liberation Sans" font-size="9.6" fill="#8a8a8a" text-anchor="middle" >80</text>
<text x="436.9" y="165.8" font-family="Liberation Sans" font-size="9.6" fill="#8a8a8a" text-anchor="middle" >146</text>
<text x="486.9" y="165.8" font-family="Liberation Sans" font-size="9.6" fill="#8a8a8a" text-anchor="middle" >156</text>
<text x="538.65" y="165.8" font-family="Liberation Sans" font-size="9.6" fill="#8a8a8a" text-anchor="middle" >158</text>
<text x="579.7" y="165.8" font-family="Liberation Sans" font-size="9.6" fill="#8a8a8a" text-anchor="middle" >90</text>
<text x="604.6500000000001" y="165.8" font-family="Liberation Sans" font-size="9.6" fill="#8a8a8a" text-anchor="middle" >62</text>
<text x="628.6" y="165.8" font-family="Liberation Sans" font-size="9.6" fill="#8a8a8a" text-anchor="middle" >84</text>
<text x="652.85" y="165.8" font-family="Liberation Sans" font-size="9.6" fill="#8a8a8a" text-anchor="middle" >62</text>
<text x="678.75" y="165.8" font-family="Liberation Sans" font-size="9.6" fill="#8a8a8a" text-anchor="middle" >94</text>
<text x="704.3499999999999" y="165.8" font-family="Liberation Sans" font-size="9.6" fill="#8a8a8a" text-anchor="middle" >62</text>
<text x="730.5" y="165.8" font-family="Liberation Sans" font-size="9.6" fill="#8a8a8a" text-anchor="middle" >96</text>
<text x="756.85" y="165.8" font-family="Liberation Sans" font-size="9.6" fill="#8a8a8a" text-anchor="middle" >62</text>
<text x="557.3" y="183.6" font-family="Liberation Sans" font-size="9.8" fill="#8a8a8a" text-anchor="middle" >Inside</text>
<text x="557.3" y="320.3" font-family="Liberation Sans" font-size="9.8" fill="#8a8a8a" text-anchor="middle" >Outside</text>
<text x="826" y="183.6" font-family="Liberation Sans" font-size="10" fill="#b2b2b2" text-anchor="end" >ubakus.de</text>
<path d="M260.4 190.3V306.3" stroke="#b8b8b8" stroke-width="1"/>
<g stroke="#777" stroke-width="0.9">
<path d="M256.8 190.3H263.6"/>
<path d="M256.8 200.8H263.6"/>
<path d="M256.8 209.6H263.6"/>
<path d="M256.8 216.6H263.6"/>
<path d="M256.8 223.9H263.6"/>
<path d="M256.8 298.3H263.6"/>
<path d="M256.8 306.3H263.6"/>
</g><g stroke="#b0b0b0" stroke-width="0.8">
<path d="M256.8 193.4H263.6"/>
<path d="M256.8 289.6H263.6"/>
<path d="M256.8 295.5H263.6"/>
<path d="M256.8 302.4H263.6"/>
</g>
<text x="263.5" y="201.0" font-family="Liberation Sans" font-size="9.3" fill="#8c8c8c" text-anchor="start" >23</text>
<text x="263.5" y="208.5" font-family="Liberation Sans" font-size="9.3" fill="#8c8c8c" text-anchor="start" >25</text>
<text x="263.5" y="216.2" font-family="Liberation Sans" font-size="9.3" fill="#8c8c8c" text-anchor="start" >22</text>
<text x="263.5" y="223.4" font-family="Liberation Sans" font-size="9.3" fill="#8c8c8c" text-anchor="start" >22</text>
<text x="263.5" y="297.6" font-family="Liberation Sans" font-size="9.3" fill="#8c8c8c" text-anchor="start" >24</text>
<text x="263.6" y="260.8" font-family="Liberation Sans" font-size="9.8" fill="#8c8c8c" text-anchor="start" >200</text>
<text x="0" y="0" font-family="Liberation Sans" font-size="9.8" fill="#8c8c8c" text-anchor="middle" transform="translate(255.6 247.6) rotate(-90)">351,5</text>
<g stroke="#5e5e5e" stroke-width="0.55" fill="none">
<path d="M826 191.6H840L857.6 111.6"/>
<path d="M826 197.3H840L857.6 128.7"/>
<path d="M826 205.1H840L857.6 145.8"/>
<path d="M826 206.7H840L857.6 162.9"/>
<path d="M826 208.3H840L857.6 180.0"/>
<path d="M826 210.0H840L857.6 197.1"/>
<path d="M826 211.6H840L857.6 214.3"/>
<path d="M826 213.6H840L857.6 231.4"/>
<path d="M826 220.0H840L857.6 265.6"/>
<path d="M826 223.6H840L857.6 282.7"/>
<path d="M821 286.5H840L857.6 299.8"/>
<path d="M826 285.3H840L857.6 316.9"/>
<path d="M821 293.6H840L857.6 334.0"/>
<path d="M821 295.8H840L857.6 351.1"/>
<path d="M821 298.6H840L857.6 368.2"/>
<path d="M821 303.9H840L857.6 385.4"/>
</g>
<path d="M850.5 216.4H854.3V247.7H857.6" stroke="#8a8a8a" stroke-width="0.7" fill="none"/>
</svg>
<div class="abs lab" style="top:105.6px;color:#414141">Lamination (10mm)</div>
<div class="abs lab" style="top:122.7px;color:#414141">Knauf Brio (23mm)</div>
<div class="abs lab" style="top:139.8px;color:#414141">Stationary air (unventilated) (25mm)</div>
<div class="abs lab" style="top:156.9px;color:#414141">Thermofloor NEO 47 (25x62mm²)</div>
<div class="abs lab" style="top:174.0px;color:#414141">Thermofloor NEO 47 (25x62mm²)</div>
<div class="abs lab" style="top:191.1px;color:#414141">Thermofloor NEO 47 (25x62mm²)</div>
<div class="abs lab" style="top:208.3px;color:#414141">Thermofloor NEO 47 (25x62mm²)</div>
<div class="abs lab" style="top:225.4px;color:#414141">Thermofloor NEO 47 (22mm)</div>
<div class="abs lab" style="top:242.5px;color:#a8a8a8">Knauf Insulation Akustik-Dämmplatte (22mm)</div>
<div class="abs lab" style="top:259.6px;color:#414141">Spruce (22mm)</div>
<div class="abs lab" style="top:276.7px;color:#414141">Vapor retarder sd=5m (0,5mm)</div>
<div class="abs lab" style="top:293.8px;color:#414141">Flexible wood fibre insulation board (200mm)</div>
<div class="abs lab" style="top:310.9px;color:#414141">Spruce (200x80mm²)</div>
<div class="abs lab" style="top:328.0px;color:#414141">Stationary air (unventilated) (24mm)</div>
<div class="abs lab" style="top:345.1px;color:#414141">Spruce (24x48mm²)</div>
<div class="abs lab" style="top:362.2px;color:#414141">Gypsum Fibreboard (12,5mm)</div>
<div class="abs lab" style="top:379.4px;color:#414141">Gypsum Fibreboard (12,5mm)</div>
<svg class="abs" style="left:0;top:490px" width="20" height="20" viewBox="0 490 20 20"><path d="M6.7 496H15.5L11.1 503.9Z" fill="#f4f4f4"/></svg>
<div class="abs bt" style="left:161.1px;top:496.5px;font-size:14.7px;color:#e8e8e8;">U-value:</div>
<div class="abs bt" style="left:220.2px;top:494.3px;font-size:17.2px;color:#e8e8e8;">0,172</div>
<div class="abs bt" style="left:268.7px;top:500.2px;font-size:10.3px;color:#e8e8e8;">W/(m²K)</div>
<svg class="abs" style="left:311px;top:497.5px" width="14" height="12" viewBox="0 0 14 12"><path transform="translate(14 0) scale(-1 1)" d="M1.6 10.6L7.3 4.9C6.8 3.4 7.3 1.6 9 0.9C9.9 0.5 10.8 0.6 11.4 0.9L9.6 2.6L10.1 3.8L11.4 4.2L13 2.6C13.3 3.4 13.2 4.3 12.8 5C12 6.5 10.3 7 8.9 6.5L3.2 12.2Z" fill="#bdbdbd"/></svg>
<div class="abs" style="left:161px;top:517px;width:165px;height:8px;background:#4a4a4a;border-top:1px solid #414141"></div>
<div class="abs" style="left:161px;top:517.9px;width:29.099999999999994px;height:7px;background:linear-gradient(#a4d676,#8cc65a 35%,#8cc65a)"></div>
<div class="abs" style="left:161px;top:525px;width:165px;height:0.8px;background:#787878"></div>
<div class="abs" style="left:161.4px;top:525.9px;width:164.6px;height:1.8px;background:linear-gradient(90deg,#6f9e3c 0%,#7c9f3a 40%,#b8a632 62%,#c27a2e 80%,#c23028 96%,#c02828 100%);opacity:0.9"></div>
<div class="abs" style="left:324.9px;top:517px;width:1.1px;height:11.9px;background:#7a7a7a"></div>
<div class="abs bt" style="left:161.1px;top:534.0px;font-size:9.15px;color:#e8e8e8;">GEG 2020 Bestand U ≤ -1</div>
<div class="abs" style="left:272.8px;top:532.2px;width:10.4px;height:9.6px;background:#cfcfcf"></div>
<div class="abs" style="left:274.6px;top:534.4px;width:0;height:0;border-left:3.4px solid transparent;border-right:3.4px solid transparent;border-top:5.4px solid #3a3a3a"></div>
<div class="abs bt" style="left:161.1px;top:552.9px;font-size:9.2px;color:#e8e8e8;">Contribution to the greenhouse effect:</div>
<div class="abs" style="left:161px;top:563.5px;width:165px;height:5px;background:#4a4a4a;border-top:1px solid #414141"></div>
<div class="abs" style="left:161px;top:564.4px;width:20.5px;height:4.1px;background:linear-gradient(#a4d676,#8cc65a 35%,#8cc65a)"></div>
<div class="abs" style="left:161px;top:568.5px;width:165px;height:0.8px;background:#787878"></div>
<div class="abs" style="left:161.4px;top:570.2px;width:164.6px;height:1.8px;background:linear-gradient(90deg,#6f9e3c 0%,#7c9f3a 40%,#b8a632 62%,#c27a2e 80%,#c23028 96%,#c02828 100%);opacity:0.9"></div>
<div class="abs" style="left:324.9px;top:563.5px;width:1.1px;height:8.9px;background:#7a7a7a"></div>
<div class="abs bt" style="left:161.1px;top:578.2px;font-size:8.6px;color:#9c9c9c;">excellent</div>
<div class="abs bt" style="right:698.5px;top:578.2px;font-size:8.6px;color:#9c9c9c;text-align:right;">insufficient</div>
<div class="abs bt" style="left:340.2px;top:496.1px;font-size:9.2px;color:#e8e8e8;">Condensate: 0 kg/m²</div>
<div class="abs" style="left:340.2px;top:506.4px;width:164.8px;height:5px;background:#4a4a4a;border-top:1px solid #414141"></div>
<div class="abs" style="left:340.8px;top:507.4px;width:1.2px;height:3.8px;background:#8cc65a"></div>
<div class="abs" style="left:340.2px;top:511.4px;width:164.8px;height:0.8px;background:#787878"></div>
<div class="abs" style="left:340.59999999999997px;top:513.1px;width:164.4px;height:1.8px;background:linear-gradient(90deg,#6f9e3c 0%,#7c9f3a 40%,#b8a632 62%,#c27a2e 80%,#c23028 96%,#c02828 100%);opacity:0.9"></div>
<div class="abs" style="left:503.9px;top:506.4px;width:1.1px;height:8.9px;background:#7a7a7a"></div>
<div class="abs bt" style="left:340.2px;top:524.5px;font-size:9.2px;color:#e8e8e8;">moisture content of wood: +0,0 %</div>
<div class="abs" style="left:340.2px;top:534.9px;width:164.8px;height:5px;background:#4a4a4a;border-top:1px solid #414141"></div>
<div class="abs" style="left:340.8px;top:535.9px;width:1.2px;height:3.8px;background:#8cc65a"></div>
<div class="abs" style="left:340.2px;top:539.9px;width:164.8px;height:0.8px;background:#787878"></div>
<div class="abs" style="left:340.59999999999997px;top:541.6px;width:164.4px;height:1.8px;background:linear-gradient(90deg,#6f9e3c 0%,#7c9f3a 18%,#b8a632 30%,#c27a2e 40%,#c23028 52%,#b82828 100%);opacity:0.9"></div>
<div class="abs" style="left:503.9px;top:534.9px;width:1.1px;height:8.9px;background:#7a7a7a"></div>
<div class="abs bt" style="left:340.2px;top:552.9px;font-size:9.2px;color:#e8e8e8;">Drying time: -</div>
<div class="abs" style="left:340.2px;top:563.3px;width:164.8px;height:5px;background:#4a4a4a;border-top:1px solid #414141"></div>
<div class="abs" style="left:340.8px;top:564.3px;width:1.2px;height:3.8px;background:#8cc65a"></div>
<div class="abs" style="left:340.2px;top:568.3px;width:164.8px;height:0.8px;background:#787878"></div>
<div class="abs" style="left:340.59999999999997px;top:570.0px;width:164.4px;height:1.8px;background:linear-gradient(90deg,#6f9e3c 0%,#7c9f3a 40%,#b8a632 62%,#c27a2e 80%,#c23028 96%,#c02828 100%);opacity:0.9"></div>
<div class="abs" style="left:503.9px;top:563.3px;width:1.1px;height:8.9px;background:#7a7a7a"></div>
<div class="abs bt" style="left:340.2px;top:578.2px;font-size:8.6px;color:#9c9c9c;">excellent</div>
<div class="abs bt" style="right:519.5px;top:578.2px;font-size:8.6px;color:#9c9c9c;text-align:right;">insufficient</div>
<div class="abs bt" style="left:519.3px;top:496.1px;font-size:9.2px;color:#e8e8e8;">sd-value: 8,1 m</div>
<div class="abs bt" style="right:339.79999999999995px;top:496.1px;font-size:9.2px;color:#e8e8e8;text-align:right;">Thickness: 35,15 cm</div>
<div class="abs bt" style="right:339.79999999999995px;top:508.7px;font-size:9.2px;color:#e8e8e8;text-align:right;">Weight: 93 kg/m²</div>
<div class="abs bt" style="left:519.3px;top:523.2px;font-size:9.2px;color:#e8e8e8;">Interior surface: 24,5°C (38%)</div>
<div class="abs" style="left:519.3px;top:533.6px;width:165.20000000000005px;height:5px;background:#4a4a4a;border-top:1px solid #414141"></div>
<div class="abs" style="left:519.3px;top:534.5px;width:102.40000000000009px;height:4.1px;background:linear-gradient(#a4d676,#8cc65a 35%,#8cc65a)"></div>
<div class="abs" style="left:519.3px;top:538.6px;width:165.20000000000005px;height:0.8px;background:#787878"></div>
<div class="abs" style="left:519.6999999999999px;top:540.3000000000001px;width:164.80000000000004px;height:1.8px;background:linear-gradient(90deg,#b82828 0%,#c23028 15%,#c27a2e 21%,#b8a632 28%,#7c9f3a 37%,#6f9e3c 100%);opacity:0.9"></div>
<div class="abs" style="left:683.4px;top:533.6px;width:1.1px;height:8.9px;background:#7a7a7a"></div>
<div class="abs bt" style="left:519.3px;top:551.4px;font-size:9.2px;color:#e8e8e8;">Drying reserve: 666 g//m²a</div>
<div class="abs" style="left:519.3px;top:562.3px;width:165.20000000000005px;height:5px;background:#4a4a4a;border-top:1px solid #414141"></div>
<div class="abs" style="left:519.3px;top:563.1999999999999px;width:164.70000000000005px;height:4.1px;background:linear-gradient(#a4d676,#8cc65a 35%,#8cc65a)"></div>
<div class="abs" style="left:519.3px;top:567.3px;width:165.20000000000005px;height:0.8px;background:#787878"></div>
<div class="abs" style="left:519.6999999999999px;top:569.0px;width:164.80000000000004px;height:1.8px;background:linear-gradient(90deg,#b82828 0%,#c23028 43%,#c27a2e 48%,#b8a632 52%,#7c9f3a 58%,#6f9e3c 100%);opacity:0.9"></div>
<div class="abs" style="left:683.4px;top:562.3px;width:1.1px;height:8.9px;background:#7a7a7a"></div>
<div class="abs bt" style="left:519.3px;top:576.4px;font-size:8.6px;color:#9c9c9c;">insufficient</div>
<div class="abs bt" style="right:339.79999999999995px;top:576.4px;font-size:8.6px;color:#9c9c9c;text-align:right;">excellent</div>
<div class="abs bt" style="left:698.7px;top:495.7px;font-size:9.2px;color:#e8e8e8;">temp. amplitude damping (1/TAV): 45,0</div>
<div class="abs" style="left:698.7px;top:506.6px;width:164.5px;height:5px;background:#4a4a4a;border-top:1px solid #414141"></div>
<div class="abs" style="left:698.7px;top:507.5px;width:163.79999999999995px;height:4.1px;background:linear-gradient(#a4d676,#8cc65a 35%,#8cc65a)"></div>
<div class="abs" style="left:698.7px;top:511.6px;width:164.5px;height:0.8px;background:#787878"></div>
<div class="abs" style="left:699.1px;top:513.3000000000001px;width:164.1px;height:1.8px;background:linear-gradient(90deg,#c02828 0%,#c27a2e 10%,#b8a632 22%,#7c9f3a 42%,#6f9e3c 100%);opacity:0.9"></div>
<div class="abs" style="left:862.1px;top:506.6px;width:1.1px;height:8.9px;background:#7a7a7a"></div>
<div class="abs bt" style="left:698.7px;top:524.5px;font-size:9.2px;color:#e8e8e8;">phase shift: 14 h</div>
<div class="abs" style="left:698.7px;top:535.0px;width:164.5px;height:5px;background:#4a4a4a;border-top:1px solid #414141"></div>
<div class="abs" style="left:698.7px;top:535.9px;width:123.39999999999998px;height:4.1px;background:linear-gradient(#a4d676,#8cc65a 35%,#8cc65a)"></div>
<div class="abs" style="left:698.7px;top:540.0px;width:164.5px;height:0.8px;background:#787878"></div>
<div class="abs" style="left:699.1px;top:541.7px;width:164.1px;height:1.8px;background:linear-gradient(90deg,#c02828 0%,#c27a2e 10%,#b8a632 22%,#7c9f3a 42%,#6f9e3c 100%);opacity:0.9"></div>
<div class="abs" style="left:862.1px;top:535.0px;width:1.1px;height:8.9px;background:#7a7a7a"></div>
<div class="abs bt" style="left:698.7px;top:552.9px;font-size:9.2px;color:#e8e8e8;">Heat storage capacity: 47306 kJ/m²K</div>
<div class="abs" style="left:698.7px;top:563.4px;width:164.5px;height:5px;background:#4a4a4a;border-top:1px solid #414141"></div>
<div class="abs" style="left:698.7px;top:564.3px;width:163.79999999999995px;height:4.1px;background:linear-gradient(#a4d676,#8cc65a 35%,#8cc65a)"></div>
<div class="abs" style="left:698.7px;top:568.4px;width:164.5px;height:0.8px;background:#787878"></div>
<div class="abs" style="left:699.1px;top:570.1px;width:164.1px;height:1.8px;background:linear-gradient(90deg,#c02828 0%,#c27a2e 10%,#b8a632 22%,#7c9f3a 42%,#6f9e3c 100%);opacity:0.9"></div>
<div class="abs" style="left:862.1px;top:563.4px;width:1.1px;height:8.9px;background:#7a7a7a"></div>
<div class="abs bt" style="left:698.7px;top:578.2px;font-size:8.6px;color:#9c9c9c;">insufficient</div>
<div class="abs bt" style="right:161px;top:578.2px;font-size:8.6px;color:#9c9c9c;text-align:right;">excellent</div>

</body></html>
